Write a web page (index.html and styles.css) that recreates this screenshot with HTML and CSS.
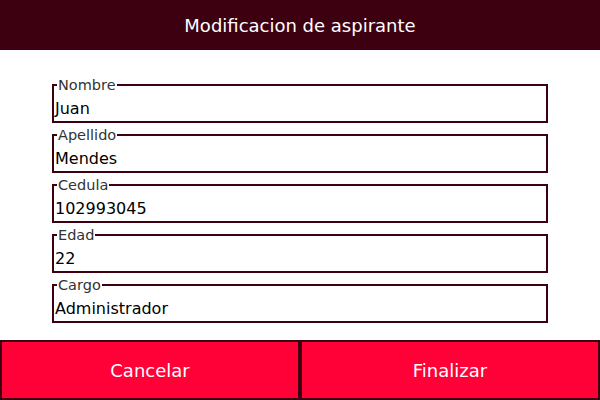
FILE: index.html
```html
<!DOCTYPE html>
<html>
<head>
<meta charset="utf-8">
<link rel="stylesheet" href="styles.css">
</head>
<body>
<div class="app">
  <header class="topbar">Modificacion de aspirante</header>
  <form class="form">
    <fieldset class="field"><legend>Nombre</legend><div class="value">Juan</div></fieldset>
    <fieldset class="field"><legend>Apellido</legend><div class="value">Mendes</div></fieldset>
    <fieldset class="field"><legend>Cedula</legend><div class="value">102993045</div></fieldset>
    <fieldset class="field"><legend>Edad</legend><div class="value">22</div></fieldset>
    <fieldset class="field"><legend>Cargo</legend><div class="value">Administrador</div></fieldset>
  </form>
  <div class="actions">
    <button class="btn" type="button">Cancelar</button>
    <button class="btn" type="button">Finalizar</button>
  </div>
</div>
</body>
</html>
```
FILE: styles.css
```css
* { box-sizing: border-box; }
html, body { margin: 0; padding: 0; }
body {
  width: 600px;
  height: 400px;
  background: #ffffff;
  font-family: "DejaVu Sans", sans-serif;
  overflow: hidden;
}
.app {
  display: flex;
  flex-direction: column;
  height: 400px;
}
.topbar {
  height: 50px;
  flex: none;
  background: #3d0011;
  color: #ffffff;
  font-size: 18px;
  display: flex;
  align-items: center;
  justify-content: center;
}
.form {
  display: flex;
  flex-direction: column;
  gap: 6px;
  padding: 29px 52px 0 52px;
  height: 290px;
  flex: none;
}
.field {
  margin: 0;
  padding: 0 1px;
  height: 44px;
  flex: none;
  border: 2px solid #3d0011;
  min-width: 0;
}
.field legend {
  font-size: 14.5px;
  color: #333333;
  padding: 0 1px;
  margin-left: 2px;
  line-height: 12px;
}
.value {
  font-size: 16px;
  color: #000;
  line-height: 20px;
  padding-top: 8px;
}
.actions {
  display: flex;
  height: 60px;
  flex: none;
}
.btn {
  flex: 1;
  margin: 0;
  background: #ff0037;
  border: 2px solid #3d0011;
  color: #ffffff;
  font-family: "DejaVu Sans", sans-serif;
  font-size: 18px;
  padding: 0;
}
```
